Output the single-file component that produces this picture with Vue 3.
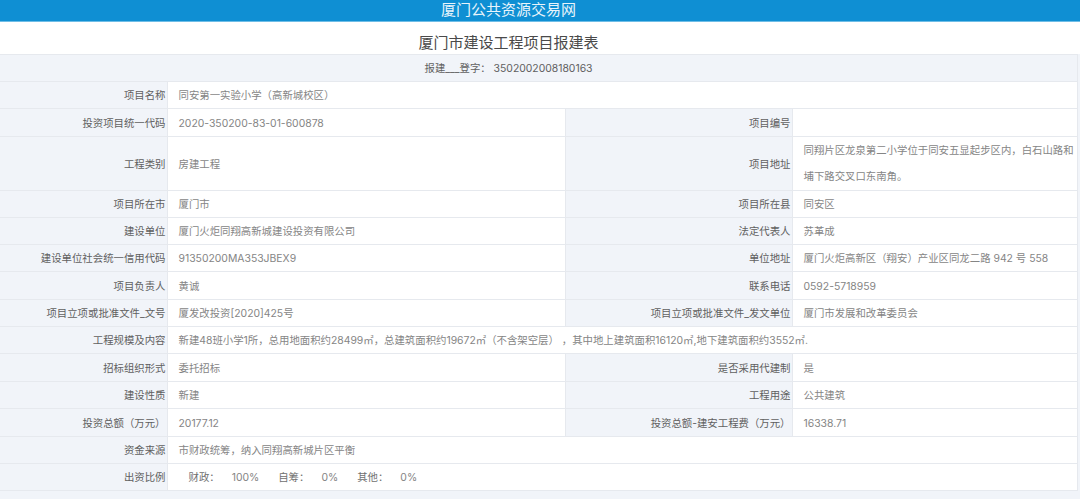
<script setup>
const rows = [
  { type: 'wide', h: 27, label: '项目名称', value: '同安第一实验小学（高新城校区）' },
  { type: 'pair', h: 28, a: '投资项目统一代码', b: '2020-350200-83-01-600878', c: '项目编号', d: '' },
  { type: 'pair', h: 54, a: '工程类别', b: '房建工程', c: '项目地址', d: '同翔片区龙泉第二小学位于同安五显起步区内，白石山路和埔下路交叉口东南角。', tall: true },
  { type: 'pair', h: 27, a: '项目所在市', b: '厦门市', c: '项目所在县', d: '同安区' },
  { type: 'pair', h: 27, a: '建设单位', b: '厦门火炬同翔高新城建设投资有限公司', c: '法定代表人', d: '苏革成' },
  { type: 'pair', h: 27, a: '建设单位社会统一信用代码', b: '91350200MA353JBEX9', c: '单位地址', d: '厦门火炬高新区（翔安）产业区同龙二路 942 号 558' },
  { type: 'pair', h: 28, a: '项目负责人', b: '黄诚', c: '联系电话', d: '0592-5718959' },
  { type: 'pair', h: 27, a: '项目立项或批准文件_文号', b: '厦发改投资[2020]425号', c: '项目立项或批准文件_发文单位', d: '厦门市发展和改革委员会' },
  { type: 'wide', h: 27, label: '工程规模及内容', value: '新建48班小学1所，总用地面积约28499㎡，总建筑面积约19672㎡（不含架空层） ，其中地上建筑面积16120㎡,地下建筑面积约3552㎡.' },
  { type: 'pair', h: 28, a: '招标组织形式', b: '委托招标', c: '是否采用代建制', d: '是' },
  { type: 'pair', h: 27, a: '建设性质', b: '新建', c: '工程用途', d: '公共建筑' },
  { type: 'pair', h: 28, a: '投资总额（万元）', b: '20177.12', c: '投资总额-建安工程费（万元）', d: '16338.71' },
  { type: 'wide', h: 27, label: '资金来源', value: '市财政统筹，纳入同翔高新城片区平衡' },
  { type: 'ratio', h: 27, label: '出资比例' },
]
const shares = [
  { name: '财政：', pct: '100%' },
  { name: '自筹：', pct: '0%' },
  { name: '其他：', pct: '0%' },
]
</script>

<template>
  <div class="page">
    <header class="topbar"><span class="shift">厦门公共资源交易网</span></header>
    <h1 class="title"><span class="shift">厦门市建设工程项目报建表</span></h1>
    <table class="sheet">
      <colgroup>
        <col class="c1" />
        <col class="c2" />
        <col class="c3" />
        <col class="c4" />
      </colgroup>
      <tbody>
        <tr class="h27">
          <td colspan="4" class="head"><span class="shift">报建___登字： 3502002008180163</span></td>
        </tr>
        <tr v-for="(r, i) in rows" :key="i" :style="{ height: r.h + 'px' }">
          <template v-if="r.type === 'pair'">
            <th>{{ r.a }}</th>
            <td>{{ r.b }}</td>
            <th>{{ r.c }}</th>
            <td :class="{ tall: r.tall }">{{ r.d }}</td>
          </template>
          <template v-else-if="r.type === 'wide'">
            <th>{{ r.label }}</th>
            <td colspan="3">{{ r.value }}</td>
          </template>
          <template v-else>
            <th>{{ r.label }}</th>
            <td colspan="3" class="ratio">
              <span v-for="s in shares" :key="s.name" class="share">
                <span class="share-name">{{ s.name }}</span><span class="share-pct">{{ s.pct }}</span>
              </span>
            </td>
          </template>
        </tr>
      </tbody>
    </table>
  </div>
</template>

<style>
html, body { background: #f1f4f9; }
</style>

<style scoped>
.page {
  width: 1080px;
  height: 499px;
  overflow: hidden;
  background: #f1f4f9;
  font-family: Inter, "Noto Sans CJK SC", "Liberation Sans", sans-serif;
}
.shift {
  display: block;
  width: 1017px;
  text-align: center;
}
.topbar {
  height: 22px;
  line-height: 20px;
  background: #0f8fd3;
  color: #e8f4fb;
  font-size: 15px;
  box-sizing: border-box;
  border-bottom: 1px solid #6fbde6;
}
.title {
  margin: 0;
  height: 32px;
  line-height: 41px;
  background: #fff;
  color: #4a4a4a;
  font-size: 15px;
  font-weight: 400;
}
.sheet {
  width: 1077px;
  table-layout: fixed;
  border-collapse: collapse;
  font-size: 10.4px;
  color: #858585;
  background: #fff;
  border-top: 1px solid #e3e6ea;
}
.c1 { width: 167px; }
.c2 { width: 398px; }
.c3 { width: 227px; }
.c4 { width: 285px; }
.h27 { height: 27px; }
th, td {
  border-top: 1px solid #e6e9ee;
  border-bottom: 1px solid #e6e9ee;
  padding: 2px 0 0;
  font-weight: 400;
  line-height: 24px;
}
th {
  background: #f1f4f9;
  color: #606060;
  text-align: right;
  padding-right: 1px;
  border-right: 1px solid #e6e9ee;
}
td {
  padding-left: 11px;
  border-right: 1px solid #e6e9ee;
}
.head {
  background: #f1f4f9;
  color: #606060;
  padding-left: 0;
}
.ratio { padding-left: 21px; }
.share { margin-right: 19px; }
.share-name { color: #707070; margin-right: 12px; }
.tall { padding-top: 1px; line-height: 26px; }
</style>
